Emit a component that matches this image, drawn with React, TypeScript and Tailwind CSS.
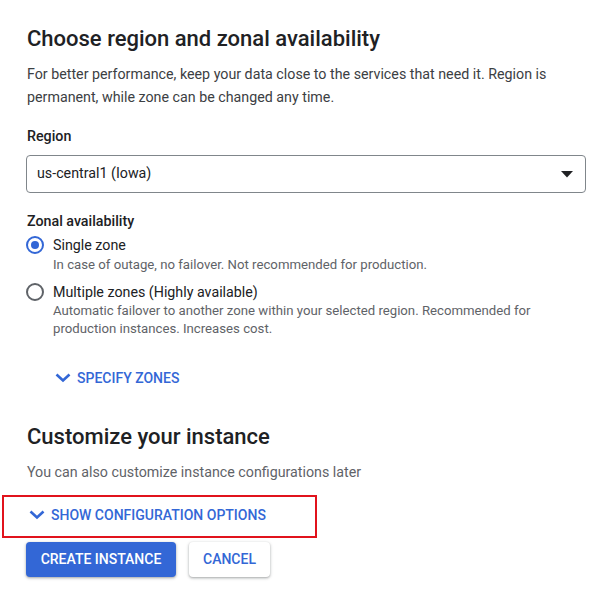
import React from "react";

function Chevron({ className = "" }: { className?: string }) {
  return (
    <svg className={className} width="16" height="10" viewBox="0 0 16 10" fill="none">
      <path d="M1.5 1.5 L8 7.5 L14.5 1.5" stroke="currentColor" strokeWidth="2.6" strokeLinecap="butt" strokeLinejoin="miter" />
    </svg>
  );
}

function Radio({ checked }: { checked?: boolean }) {
  return (
    <span
      className={
        "flex h-[18px] w-[18px] shrink-0 items-center justify-center rounded-full border-2 " +
        (checked ? "border-[#3367d6]" : "border-[#5f6368]")
      }
    >
      {checked && <span className="h-[8px] w-[8px] rounded-full bg-[#3367d6]" />}
    </span>
  );
}

export default function App() {
  return (
    <div
      className="min-h-[602px] w-[594px] bg-white pl-[27px] pr-[8px] pt-[25px] text-[#202124]"
      style={{ fontFamily: "Roboto, 'Noto Sans', Arial, sans-serif" }}
    >
      <h1 className="text-[22px] font-medium leading-[28px] text-[#202124]">
        Choose region and zonal availability
      </h1>
      <p className="mt-[10px] text-[14.25px] leading-[23px] text-[#3c4043]">
        For better performance, keep your data close to the services that need it. Region is permanent,
        while zone can be changed any time.
      </p>

      <div className="mt-[17px] text-[14.25px] font-medium leading-[20px]">Region</div>
      <div className="mt-[9px] flex h-[38px] w-[560px] items-center justify-between rounded-[4px] border border-[#80868b] pl-[10px] pr-[12px] -ml-px">
        <span className="text-[14.25px] text-[#202124]">us-central1 (Iowa)</span>
        <svg width="12" height="7" viewBox="0 0 12 7">
          <path d="M0 0 L12 0 L6 6.5 Z" fill="#202124" />
        </svg>
      </div>

      <div className="mt-[18px] text-[14.25px] font-medium leading-[20px]">Zonal availability</div>

      <div className="mt-[4px] flex items-start gap-[9px]">
        <div className="flex h-[20px] items-center -ml-px">
          <Radio checked />
        </div>
        <div>
          <div className="text-[14.25px] leading-[20px] text-[#202124]">Single zone</div>
          <div className="mt-[1px] text-[13.2px] leading-[18px] text-[#5f6368]">
            In case of outage, no failover. Not recommended for production.
          </div>
        </div>
      </div>

      <div className="mt-[8px] flex items-start gap-[9px]">
        <div className="flex h-[20px] items-center -ml-px">
          <Radio />
        </div>
        <div>
          <div className="text-[14.25px] leading-[20px] text-[#202124]">Multiple zones (Highly available)</div>
          <div className="w-[500px] text-[13.2px] leading-[18px] text-[#5f6368]">
            Automatic failover to another zone within your selected region. Recommended for production
            instances. Increases cost.
          </div>
        </div>
      </div>

      <div className="mt-[30px] flex h-[20px] items-center gap-[6px] pl-[28px] text-[#3367d6]">
        <Chevron />
        <span className="text-[14px] font-medium uppercase leading-[20px]">Specify zones</span>
      </div>

      <h2 className="mt-[35px] text-[22px] font-medium leading-[28px] text-[#202124]">Customize your instance</h2>
      <p className="mt-[10px] text-[14.25px] leading-[23px] text-[#5f6368]">
        You can also customize instance configurations later
      </p>

      <div className="-ml-[25px] mt-[11px] flex h-[43px] w-[315px] items-center gap-[6px] border-2 border-[#e1131c] pb-[3px] pl-[25px] text-[#3367d6]">
        <Chevron />
        <span className="text-[14px] font-medium uppercase leading-[20px]">Show configuration options</span>
      </div>

      <div className="-ml-px mt-[4px] flex gap-[13px]">
        <button className="flex h-[35px] w-[150px] items-center justify-center rounded-[4px] bg-[#3367d6] text-[14px] font-medium uppercase text-white shadow-[0_1px_2px_rgba(60,64,67,0.3),0_1px_3px_1px_rgba(60,64,67,0.15)]">
          Create instance
        </button>
        <button className="flex h-[35px] w-[81px] items-center justify-center rounded-[4px] bg-white text-[14px] font-medium uppercase text-[#3367d6] shadow-[0_1px_2px_rgba(60,64,67,0.3),0_1px_3px_1px_rgba(60,64,67,0.15)]">
          Cancel
        </button>
      </div>
    </div>
  );
}
